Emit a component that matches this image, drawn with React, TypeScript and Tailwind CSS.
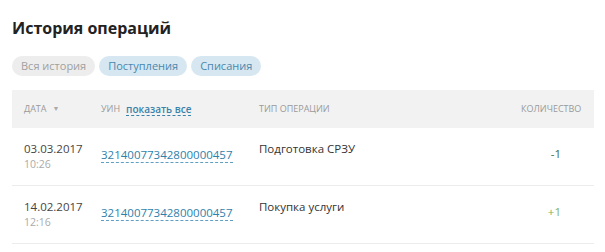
import React from "react";

interface Operation {
  date: string;
  time: string;
  uin: string;
  type: string;
  amount: number;
}

const operations: Operation[] = [
  { date: "03.03.2017", time: "10:26", uin: "32140077342800000457", type: "Подготовка СРЗУ", amount: -1 },
  { date: "14.02.2017", time: "12:16", uin: "32140077342800000457", type: "Покупка услуги", amount: 1 },
];

export default function App() {
  return (
    <div className="w-[605px] h-[252px] bg-white overflow-hidden px-3 pt-[17px] font-['Open_Sans',sans-serif]">
      <h1 className="text-[16px] leading-[22px] font-bold text-[#222]">История операций</h1>

      {/* Filters */}
      <div className="flex gap-[4px] mt-[17px]">
        <span className="h-[20px] px-[9px] rounded-full bg-[#ededed] text-[#a0a0a0] text-[11px] leading-[20px]">
          Вся история
        </span>
        <span className="h-[20px] px-[9px] rounded-full bg-[#d6e7f2] text-[#4a87ad] text-[11px] leading-[20px]">
          Поступления
        </span>
        <span className="h-[20px] px-[9px] rounded-full bg-[#d6e7f2] text-[#4a87ad] text-[11px] leading-[20px]">
          Списания
        </span>
      </div>

      {/* Table */}
      <div className="mt-[14px] w-[582px]">
        <div className="grid grid-cols-[89px_158px_262px_73px] h-[38px] items-center bg-[#f2f2f2] text-[9px] uppercase text-[#9a9a9a]">
          <div className="pl-3 flex items-center gap-[6px]">
            Дата <span className="text-[7px] text-[#aaa]">▼</span>
          </div>
          <div className="flex items-center gap-[6px]">
            УИН
            <span className="normal-case text-[10px] font-semibold text-[#3b82ab] border-b border-dashed border-[#3b82ab] leading-[12px]">
              показать все
            </span>
          </div>
          <div>Тип операции</div>
          <div>Количество</div>
        </div>

        {operations.map((op, i) => (
          <div
            key={i}
            className="grid grid-cols-[89px_158px_262px_73px] h-[58px] border-b border-[#ececec] pt-[13px]"
          >
            <div className="pl-3">
              <div className="text-[11.5px] leading-[16px] text-[#444]">{op.date}</div>
              <div className="text-[10.5px] leading-[14px] text-[#aaa]">{op.time}</div>
            </div>
            <div>
              <span className="text-[11.5px] leading-[15px] text-[#2f7fab] border-b border-dashed border-[#5f9fc4]">
                {op.uin}
              </span>
            </div>
            <div className="text-[11.5px] leading-[16px] text-[#333]">{op.type}</div>
            <div
              className={`text-right pr-[33px] text-[11.5px] leading-[16px] pt-[5px] ${
                op.amount < 0 ? "text-[#3f6b3f]" : "text-[#80b35c]"
              }`}
            >
              {op.amount > 0 ? `+${op.amount}` : op.amount}
            </div>
          </div>
        ))}
      </div>
    </div>
  );
}
